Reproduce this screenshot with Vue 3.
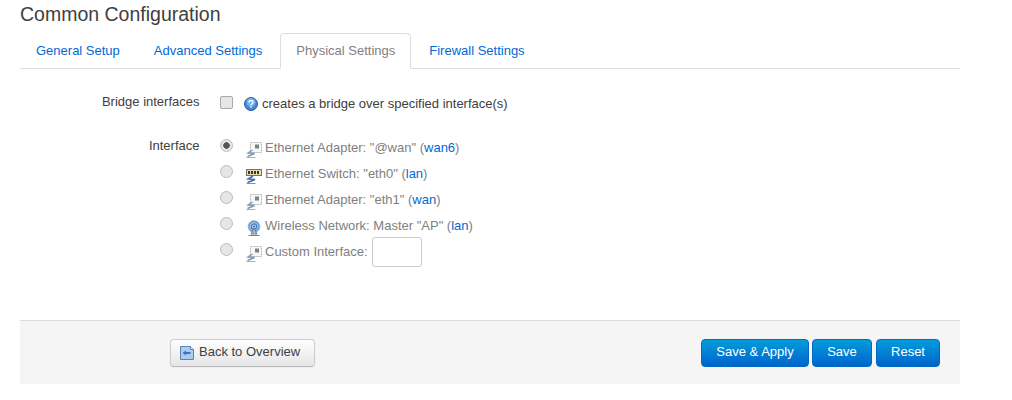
<script setup>
const rows = [
  { icon: 'eth', text: 'Ethernet Adapter: "@wan" (', link: 'wan6', checked: true },
  { icon: 'switch', text: 'Ethernet Switch: "eth0" (', link: 'lan' },
  { icon: 'eth', text: 'Ethernet Adapter: "eth1" (', link: 'wan' },
  { icon: 'wifi', text: 'Wireless Network: Master "AP" (', link: 'lan' },
]
const tabs = ['General Setup', 'Advanced Settings', 'Physical Settings', 'Firewall Settings']
</script>

<template>
  <div class="page">
    <h3 class="title">Common Configuration</h3>
    <ul class="tabs">
      <li v-for="t in tabs" :key="t" :class="['tab', { active: t === 'Physical Settings' }]">{{ t }}</li>
    </ul>

    <div class="form">
      <div class="field bridge">
        <label class="label">Bridge interfaces</label>
        <div class="control bridge-control">
          <span class="checkbox"></span>
          <svg class="help" width="14" height="14" viewBox="0 0 14 14">
            <circle cx="7" cy="7" r="6.5" fill="#3f85d0" stroke="#2a5f9e" />
            <circle cx="7" cy="5.5" r="4.6" fill="#6fb0ea" />
            <path d="M5 5.4c0-2.6 4-2.6 4 0 0 1.400-2 1.300-2 2.800" fill="none" stroke="#fff" stroke-width="1.400" />
            <rect x="6.300" y="9.400" width="1.400" height="1.500" fill="#fff" />
          </svg>
          <span class="hint">creates a bridge over specified interface(s)</span>
        </div>
      </div>

      <div class="field iface">
        <label class="label">Interface</label>
        <div class="control list">
          <div v-for="r in rows" :key="r.text" class="row">
            <span :class="['radio', { on: r.checked }]"></span>
            <svg v-if="r.icon === 'eth'" class="ico" width="16" height="16" viewBox="0 0 16 16">
              <rect x="4.500" y="0.500" width="11" height="10" fill="#f8f8f8" stroke="#b4b4b4" stroke-dasharray="2 1" />
              <rect x="9" y="2.500" width="4" height="4" fill="#7a828a" />
              <path d="M6.500 8 2 11 8.500 11.500 1.500 14.500" fill="none" stroke="#7d9abb" stroke-width="1.500" />
              <path d="M0.500 15.500h9" stroke="#a9b1b9" />
            </svg>
            <svg v-else-if="r.icon === 'switch'" class="ico" width="16" height="16" viewBox="0 0 16 16">
              <rect x="0.500" y="1.500" width="15" height="6" fill="#e6dcae" stroke="#77725a" />
              <path d="M2 3h2v3H2zM5 3h2v3H5zM8 3h2v3H8zM11 3h2v3h-2z" fill="#33373c" />
              <path d="M7 8 2 11 9 11.500 1.500 14.500" fill="none" stroke="#3f6ea8" stroke-width="1.500" />
              <path d="M0.500 15.500h9" stroke="#7f93ab" />
            </svg>
            <svg v-else class="ico" width="16" height="16" viewBox="0 0 16 16">
              <circle cx="8" cy="6.500" r="6.500" fill="#b8d4ef" />
              <circle cx="8" cy="6.500" r="5" fill="none" stroke="#5f96d0" stroke-width="1.300" />
              <circle cx="8" cy="6.500" r="2.700" fill="none" stroke="#3f78bb" stroke-width="1.300" />
              <circle cx="8" cy="6.500" r="1" fill="#3a6ba8" />
              <path d="M8 8 5 14h6z" fill="#a8b8c6" stroke="#70808f" />
              <path d="M2.500 15.500h11" stroke="#70808f" />
            </svg>
            <span class="text">{{ r.text }}<a class="link">{{ r.link }}</a>)</span>
          </div>
          <div class="row custom">
            <span class="radio"></span>
            <svg class="ico" width="16" height="16" viewBox="0 0 16 16">
              <rect x="4.500" y="0.500" width="11" height="10" fill="#f8f8f8" stroke="#b4b4b4" stroke-dasharray="2 1" />
              <rect x="9" y="2.500" width="4" height="4" fill="#7a828a" />
              <path d="M6.500 8 2 11 8.500 11.500 1.500 14.500" fill="none" stroke="#7d9abb" stroke-width="1.500" />
              <path d="M0.500 15.500h9" stroke="#a9b1b9" />
            </svg>
            <span class="text">Custom Interface:</span>
            <input class="input" type="text" />
          </div>
        </div>
      </div>
    </div>

    <div class="footer">
      <button class="btn back">
        <svg width="16" height="16" viewBox="0 0 16 16">
          <path d="M1.500 1.500h10l3 3v10h-13z" fill="#a9cdf0" stroke="#5c85b5" />
          <path d="M11.500 1.500v3h3" fill="#e6f0fa" stroke="#5c85b5" />
          <path d="M3.500 8 7 5.500V7h4.500v2H7v1.500z" fill="#3f76b8" />
        </svg>
        Back to Overview
      </button>
      <div class="actions">
        <button class="btn primary apply">Save &amp; Apply</button>
        <button class="btn primary save">Save</button>
        <button class="btn primary reset">Reset</button>
      </div>
    </div>
  </div>
</template>

<style scoped>
.page {
  width: 940px;
  margin-left: 20px;
  height: 400px;
  font-family: "Liberation Sans", Arial, sans-serif;
  font-size: 13px;
  color: #404040;
  overflow: hidden;
}
.title {
  margin: 0;
  height: 33px;
  font-size: 19.5px;
  font-weight: 400;
  line-height: 29px;
}
.tabs {
  list-style: none;
  margin: 0;
  padding: 0;
  display: flex;
  height: 36px;
  border-bottom: 1px solid #ddd;
  box-sizing: border-box;
}
.tab {
  height: 36px;
  box-sizing: border-box;
  padding: 0 15px;
  margin-right: 2px;
  line-height: 34px;
  color: #0069d6;
  border: 1px solid transparent;
  border-radius: 4px 4px 0 0;
}
.tab.active {
  color: #808080;
  background: #fff;
  border-color: #ddd #ddd #fff;
}
.form {
  height: 251px;
  box-sizing: border-box;
  padding-top: 24px;
}
.field {
  display: flex;
}
.label {
  width: 179.5px;
  text-align: right;
  flex: none;
  line-height: 18px;
  color: #404040;
}
.control {
  margin-left: 20.5px;
}
.bridge-control {
  display: flex;
  align-items: center;
  height: 18px;
}
.checkbox {
  width: 11px;
  height: 11px;
  border: 1px solid #a8a8a8;
  border-radius: 2px;
  background: #e6e6e6;
}
.help {
  margin-left: 11px;
  margin-top: 4px;
}
.hint {
  margin-left: 4px;
  margin-top: 2px;
  color: #404040;
}
.iface {
  margin-top: 26px;
}
.list {
  display: flex;
  flex-direction: column;
}
.row {
  display: flex;
  align-items: center;
  height: 26px;
}
.radio {
  width: 11px;
  height: 11px;
  border: 1px solid #bbb;
  border-radius: 50%;
  background: #e6e6e6;
  margin-top: -10px;
}
.radio.on {
  background: radial-gradient(circle, #555 0 3px, #e6e6e6 3.5px);
}
.ico {
  margin-left: 13px;
}
.text {
  margin-left: 3px;
  margin-top: -5px;
  color: #808080;
}
.link {
  color: #0069d6;
}
.input {
  width: 50px;
  height: 30px;
  box-sizing: border-box;
  margin: 0 0 0 4px;
  border: 1px solid #ccc;
  border-radius: 3px;
  background: #fff;
  margin-top: -4px;
}
.footer {
  height: 64px;
  box-sizing: border-box;
  border-top: 1px solid #ddd;
  background: #f5f5f5;
  display: flex;
  align-items: center;
  padding: 0 20px 0 150px;
  justify-content: space-between;
}
.btn {
  height: 28px;
  box-sizing: border-box;
  font-family: inherit;
  font-size: 13px;
  border-radius: 4px;
  padding: 0 0 2px;
  cursor: pointer;
}
.back {
  width: 145px;
  display: flex;
  align-items: center;
  gap: 4px;
  padding-left: 8px;
  color: #404040;
  border: 1px solid #ccc;
  border-bottom-color: #bbb;
  background: linear-gradient(#fff, #e6e6e6);
  box-shadow: 0 1px 2px rgba(0, 0, 0, 0.05);
}
.back svg {
  margin-top: 2px;
}
.actions {
  display: flex;
}
.primary {
  color: #fff;
  border: 1px solid #0069c0;
  background: linear-gradient(#049cdb, #0064cd);
}
.apply { width: 108px; }
.save { width: 60px; margin-left: 3px; }
.reset { width: 64px; margin-left: 4px; }
</style>
